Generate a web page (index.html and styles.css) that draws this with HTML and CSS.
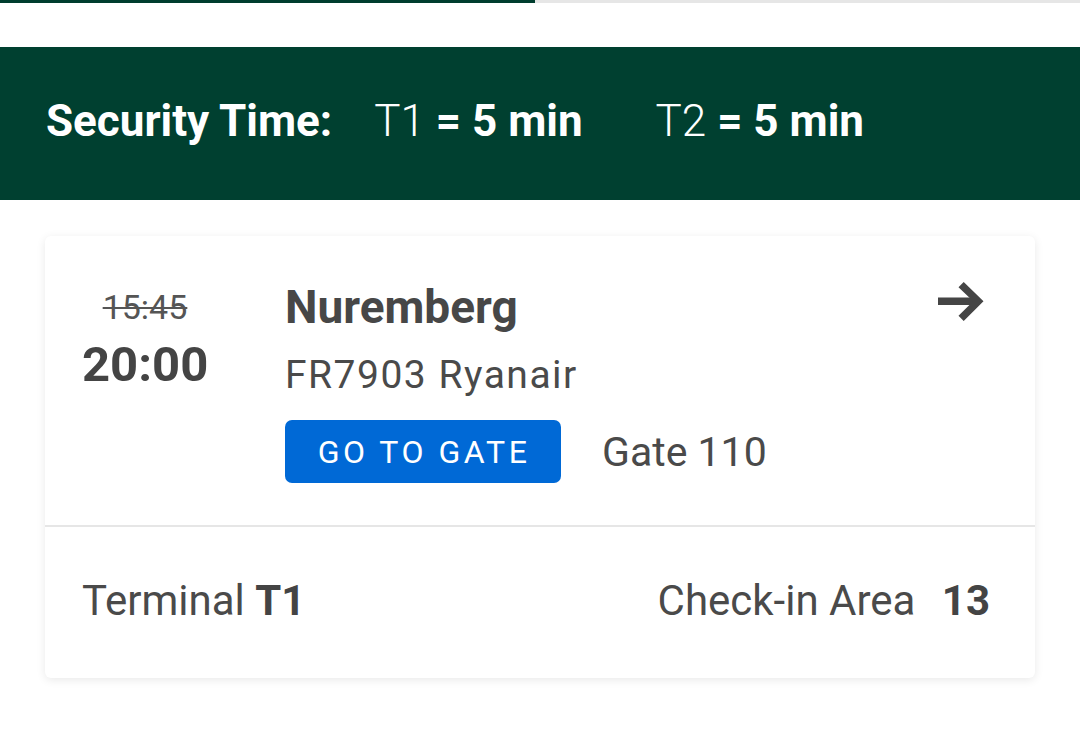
FILE: index.html
```html
<!DOCTYPE html>
<html lang="en">
<head>
<meta charset="utf-8">
<title>Flight</title>
<link rel="stylesheet" href="styles.css">
</head>
<body>
  <div class="progress"><div class="progress-fill"></div></div>

  <section class="security">
    <span class="sec-label">Security Time:</span>
    <span class="sec-item"><span class="term">T1</span> <b>=</b> <b>5 min</b></span>
    <span class="sec-item"><span class="term">T2</span> <b>=</b> <b>5 min</b></span>
  </section>

  <article class="card">
    <div class="card-top">
      <div class="times">
        <div class="time-old">15:45</div>
        <div class="time-new">20:00</div>
      </div>
      <div class="info">
        <div class="dest">Nuremberg</div>
        <div class="flight">FR7903 Ryanair</div>
        <div class="gate-row">
          <button class="gate-btn">GO TO GATE</button>
          <span class="gate">Gate 110</span>
        </div>
      </div>
      <svg class="arrow" width="48" height="40" viewBox="0 0 48 40" aria-hidden="true">
        <rect x="1" y="15.5" width="40" height="7.5" fill="#454545"/>
        <path d="M21.5 5.2L26.7 0L46.5 19.3L26.7 39L21.5 33.8L36.2 19.3Z" fill="#454545"/>
      </svg>
    </div>
    <div class="card-bottom">
      <span class="terminal">Terminal <b>T1</b></span>
      <span class="checkin">Check-in Area <b class="area">13</b></span>
    </div>
  </article>
</body>
</html>
```
FILE: styles.css
```css
html, body {
  margin: 0;
  padding: 0;
  background: #ffffff;
}
body {
  font-family: Roboto, "Noto Sans", Arial, sans-serif;
  color: #464646;
  width: 1080px;
  height: 754px;
  overflow: hidden;
}
.progress {
  height: 3px;
  background: #e6e6e6;
}
.progress-fill {
  width: 535px;
  height: 100%;
  background: #003d2e;
}
.security {
  margin-top: 44px;
  height: 153px;
  box-sizing: border-box;
  padding-bottom: 5px;
  background: #004030;
  color: #ffffff;
  display: flex;
  align-items: center;
  padding-left: 46px;
  font-size: 44px;
  white-space: pre;
}
.sec-label {
  font-weight: 700;
  margin-right: 42px;
}
.sec-item {
  margin-right: 73px;
}
.sec-item b {
  font-weight: 700;
}
.term {
  font-weight: 300;
}
.card {
  margin: 36px 45px 0 45px;
  background: #ffffff;
  border-radius: 6px;
  box-shadow: 0 2px 10px rgba(0, 0, 0, 0.09);
}
.card-top {
  display: flex;
  align-items: flex-start;
  padding: 43px 50px 42px 37px;
  border-bottom: 2px solid #e6e6e6;
}
.times {
  width: 126px;
  text-align: center;
  flex: none;
}
.time-old {
  margin-top: 8px;
  font-size: 34px;
  line-height: 40px;
  color: #555555;
  text-decoration: line-through;
  text-decoration-thickness: 2px;
}
.time-new {
  margin-top: 9px;
  font-size: 49px;
  line-height: 58px;
  font-weight: 700;
  color: #444444;
}
.info {
  flex: 1;
  margin-left: 77px;
}
.dest {
  font-size: 46px;
  line-height: 56px;
  font-weight: 700;
  color: #474747;
}
.flight {
  margin-top: 17px;
  font-size: 39px;
  line-height: 46px;
  letter-spacing: 1.5px;
  color: #4a4a4a;
}
.gate-row {
  margin-top: 22px;
  display: flex;
  align-items: center;
}
.gate-btn {
  height: 63px;
  width: 276px;
  padding: 0;
  border: none;
  border-radius: 7px;
  background: #0069d6;
  color: #ffffff;
  font-family: Roboto, "Noto Sans", Arial, sans-serif;
  font-size: 32px;
  letter-spacing: 3.5px;
  text-indent: 2px;
}
.gate {
  margin-left: 41px;
  font-size: 41px;
  color: #4a4a4a;
}
.arrow {
  flex: none;
  margin-top: 3px;
}
.card-bottom {
  height: 151px;
  box-sizing: border-box;
  padding: 0 45px 4px 37px;
  display: flex;
  align-items: center;
  justify-content: space-between;
  font-size: 42px;
  color: #4a4a4a;
}
.card-bottom b {
  font-weight: 700;
  color: #444444;
}
.area {
  margin-left: 16px;
}
```
